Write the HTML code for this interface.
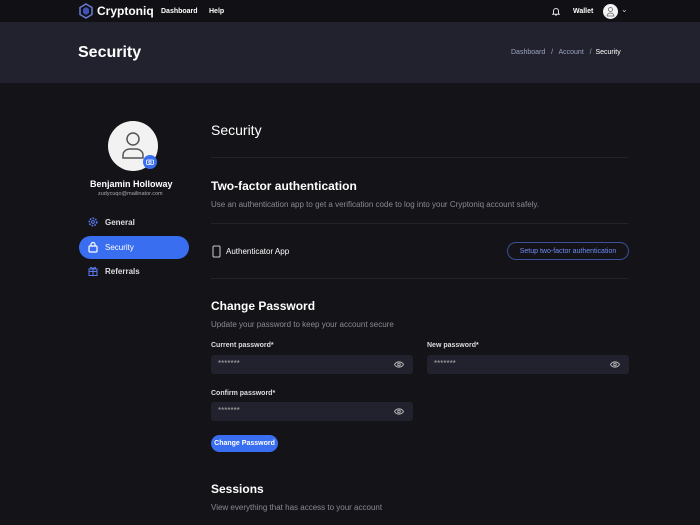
<!DOCTYPE html>
<html><head><style>
*{margin:0;padding:0;box-sizing:border-box}
body{width:700px;height:525px;overflow:hidden;background:#141318;font-family:"Liberation Sans",sans-serif;color:#fff;position:relative}
.a{position:absolute;white-space:nowrap}
.nav{position:absolute;left:0;top:0;width:700px;height:22px;background:#111014}
.hero{position:absolute;left:0;top:22px;width:700px;height:61px;background:#22222e}
.line{position:absolute;left:211px;width:417px;height:1px;background:#24232b}
.inp{position:absolute;height:19px;background:#22222e;border-radius:3px;color:#aaa;font-size:8px;padding:4px 7px}
.lbl{font-size:7px;font-weight:bold;color:#ddd}
.muted{color:#8a8a96;font-size:8px}
.btn{display:flex;align-items:center;justify-content:center}
</style></head><body>
<div class="nav"></div>
<svg class="a" style="left:78px;top:3px" width="16" height="16" viewBox="0 0 16 16"><polygon points="8,1 14,4.5 14,11.5 8,15 2,11.5 2,4.5" fill="none" stroke="#6a7bd8" stroke-width="1.5"/><polygon points="8,4 11,6 11,10 8,12 5,10 5,6" fill="#3f52b5"/></svg>
<div class="a" style="left:97px;top:4px;font-size:12px;font-weight:bold">Cryptoniq</div>
<div class="a" style="left:161px;top:8px;font-size:7px;font-weight:bold">Dashboard</div>
<div class="a" style="left:209px;top:8px;font-size:7px;font-weight:bold">Help</div>
<svg class="a" style="left:552px;top:7px" width="8" height="9" viewBox="0 0 8 9"><path d="M1.5 6.5V4a2.5 2.5 0 015 0v2.5l.8.8H.7z M3 8h2" fill="none" stroke="#ddd" stroke-width="1"/></svg>
<div class="a" style="left:573px;top:8px;font-size:7px;font-weight:bold">Wallet</div>
<div class="a" style="left:603px;top:4px;width:15px;height:15px;border-radius:50%;background:#f2f2f2"></div>
<svg class="a" style="left:606px;top:6px" width="9" height="11" viewBox="0 0 9 11"><circle cx="4.5" cy="3.5" r="2" fill="none" stroke="#666" stroke-width=".8"/><path d="M1 10a3.5 3 0 017 0z" fill="none" stroke="#666" stroke-width=".8"/></svg>
<div class="a" style="left:621px;top:5px;font-size:8px;color:#ccc">⌄</div>
<div class="hero"></div>
<div class="a" style="left:78px;top:44px;font-size:16px;font-weight:bold">Security</div>
<div class="a" style="left:511px;top:49px;font-size:7px;color:#9aa4c4">Dashboard &nbsp; / &nbsp; Account &nbsp; / &nbsp;<span style="color:#fff">Security</span></div>

<div class="a" style="left:108px;top:121px;width:50px;height:50px;border-radius:50%;background:#f2f2f2"></div>
<svg class="a" style="left:120px;top:130px" width="26" height="30" viewBox="0 0 26 30"><circle cx="13" cy="9" r="6" fill="none" stroke="#555" stroke-width="1.5"/><path d="M3 28v-3a7 6 0 017-6h6a7 6 0 017 6v3z" fill="none" stroke="#555" stroke-width="1.5"/></svg>
<div class="a" style="left:143px;top:155px;width:14px;height:14px;border-radius:50%;background:#3a6ef0"></div>
<svg class="a" style="left:146px;top:159px" width="8" height="6" viewBox="0 0 8 6"><rect x=".5" y="1" width="7" height="4.5" rx="1" fill="none" stroke="#fff" stroke-width=".8"/><circle cx="4" cy="3.2" r="1.2" fill="none" stroke="#fff" stroke-width=".8"/></svg>
<div class="a" style="left:90px;top:179px;font-size:9px;font-weight:bold">Benjamin Holloway</div>
<div class="a" style="left:98px;top:191px;font-size:5.5px;color:#aaa">zudycuqo@mailinator.com</div>
<svg class="a" style="left:88px;top:217px" width="10" height="10" viewBox="0 0 10 10"><circle cx="5" cy="5" r="3.7" fill="none" stroke="#5a7cf0" stroke-width="1.6" stroke-dasharray="1.6 1.2"/><circle cx="5" cy="5" r="1.4" fill="none" stroke="#5a7cf0" stroke-width="1"/></svg>
<div class="a" style="left:105px;top:218px;font-size:8px;font-weight:bold;color:#ddd">General</div>
<div class="a" style="left:79px;top:236px;width:110px;height:23px;border-radius:12px;background:#3a6ef0"></div>
<svg class="a" style="left:88px;top:241px" width="10" height="12" viewBox="0 0 10 12"><rect x="1" y="5" width="8" height="6" rx="1" fill="none" stroke="#fff" stroke-width="1.2"/><path d="M3 5V3.5a2 2 0 014 0V5" fill="none" stroke="#fff" stroke-width="1.2"/></svg>
<div class="a" style="left:105px;top:243px;font-size:8px;color:#fff">Security</div>
<svg class="a" style="left:88px;top:266px" width="10" height="10" viewBox="0 0 10 10"><rect x="1" y="3" width="8" height="6.5" fill="none" stroke="#5a7cf0" stroke-width="1"/><path d="M5 3v6.5M1 5.5h8M5 3C3 0 1.5 2 3 3M5 3c2-3 3.5-1 2 0" fill="none" stroke="#5a7cf0" stroke-width="1"/></svg>
<div class="a" style="left:105px;top:267px;font-size:8px;font-weight:bold;color:#ddd">Referrals</div>

<div class="a" style="left:211px;top:122px;font-size:14px">Security</div>
<div class="line" style="top:157px"></div>
<div class="a" style="left:211px;top:179px;font-size:12px;font-weight:bold">Two-factor authentication</div>
<div class="a muted" style="left:211px;top:200px">Use an authentication app to get a verification code to log into your Cryptoniq account safely.</div>
<div class="line" style="top:223px"></div>
<svg class="a" style="left:212px;top:245px" width="9" height="13" viewBox="0 0 9 13"><rect x="1" y="1" width="7" height="11" rx="1" fill="none" stroke="#ccc" stroke-width="1"/></svg>
<div class="a" style="left:226px;top:247px;font-size:8px;color:#fff">Authenticator App</div>
<div class="a btn" style="left:507px;top:242px;width:122px;height:18px;border:1px solid #3b4f9a;border-radius:9px;font-size:7px;color:#6f8cf5">Setup two-factor authentication</div>
<div class="line" style="top:278px"></div>
<div class="a" style="left:211px;top:299px;font-size:12px;font-weight:bold">Change Password</div>
<div class="a muted" style="left:211px;top:320px">Update your password to keep your account secure</div>
<div class="a lbl" style="left:211px;top:342px">Current password*</div>
<div class="a lbl" style="left:427px;top:342px">New password*</div>
<div class="a lbl" style="left:211px;top:390px">Confirm password*</div>
<div class="inp" style="left:211px;top:355px;width:202px">*******</div>
<div class="inp" style="left:427px;top:355px;width:202px">*******</div>
<div class="inp" style="left:211px;top:402px;width:202px">*******</div>
<svg class="a" style="left:394px;top:361px" width="10" height="7" viewBox="0 0 10 7"><path d="M.5 3.5C2.5 0 7.5 0 9.5 3.5 7.5 7 2.5 7 .5 3.5z" fill="none" stroke="#bbb" stroke-width=".9"/><circle cx="5" cy="3.5" r="1.3" fill="none" stroke="#bbb" stroke-width=".9"/></svg>
<svg class="a" style="left:610px;top:361px" width="10" height="7" viewBox="0 0 10 7"><path d="M.5 3.5C2.5 0 7.5 0 9.5 3.5 7.5 7 2.5 7 .5 3.5z" fill="none" stroke="#bbb" stroke-width=".9"/><circle cx="5" cy="3.5" r="1.3" fill="none" stroke="#bbb" stroke-width=".9"/></svg>
<svg class="a" style="left:394px;top:408px" width="10" height="7" viewBox="0 0 10 7"><path d="M.5 3.5C2.5 0 7.5 0 9.5 3.5 7.5 7 2.5 7 .5 3.5z" fill="none" stroke="#bbb" stroke-width=".9"/><circle cx="5" cy="3.5" r="1.3" fill="none" stroke="#bbb" stroke-width=".9"/></svg>
<div class="a btn" style="left:211px;top:435px;width:67px;height:17px;border-radius:9px;background:#3a6ef0;font-size:7px;font-weight:bold">Change Password</div>
<div class="a" style="left:211px;top:482px;font-size:12px;font-weight:bold">Sessions</div>
<div class="a muted" style="left:211px;top:503px">View everything that has access to your account</div>
</body></html>
